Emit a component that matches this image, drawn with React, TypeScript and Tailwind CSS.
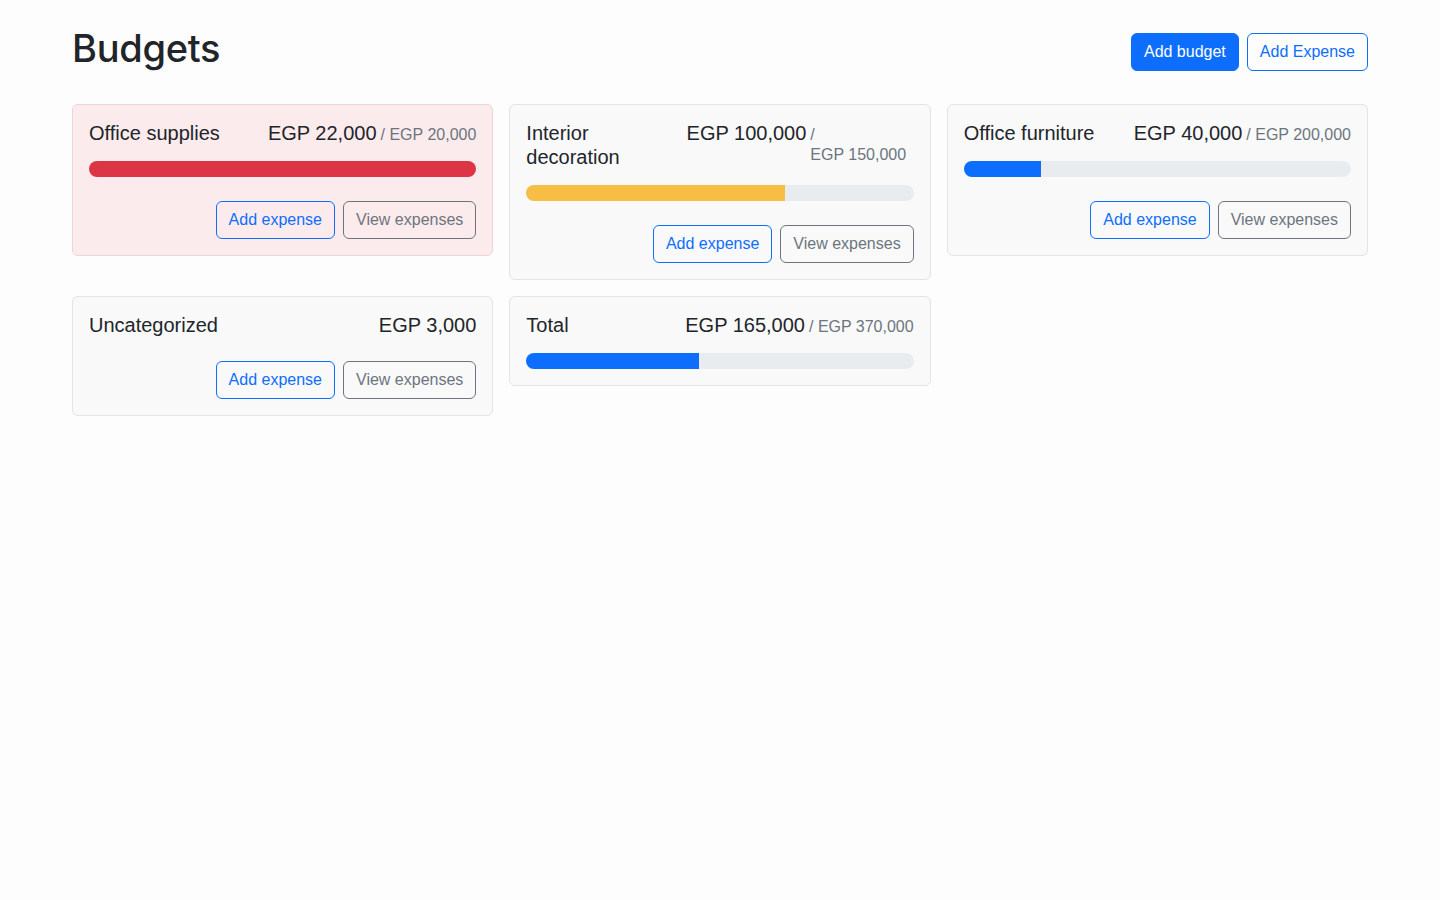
import React from "react";

type Budget = {
  name: string;
  spent: number;
  max?: number;
  actions?: boolean;
};

const BUDGETS: Budget[] = [
  { name: "Office supplies", spent: 22000, max: 20000, actions: true },
  { name: "Interior decoration", spent: 100000, max: 150000, actions: true },
  { name: "Office furniture", spent: 40000, max: 200000, actions: true },
  { name: "Uncategorized", spent: 3000, actions: true },
  { name: "Total", spent: 165000, max: 370000 },
];

const fmt = (n: number) => `EGP ${n.toLocaleString("en-US")}`;

const barColor = (ratio: number) => {
  if (ratio >= 1) return "bg-[#dc3545]";
  if (ratio >= 0.5) return "bg-[#f6be45]";
  return "bg-[#0d6efd]";
};

const BudgetCard = ({ budget }: { budget: Budget }) => {
  const ratio = budget.max ? budget.spent / budget.max : 0;
  const over = !!budget.max && budget.spent > budget.max;

  return (
    <div
      className={
        over
          ? "rounded-md border border-[#eed3d7] bg-[#fcebed] p-4"
          : "rounded-md border border-[#e3e4e6] bg-[#f9f9fa] p-4"
      }
    >
      <h2 className="mb-4 flex items-baseline justify-between text-[20px] font-normal leading-[24px] text-[#212529]">
        <div>{budget.name}</div>
        <div className="flex items-baseline">
          <span className="whitespace-nowrap">{fmt(budget.spent)}</span>
          {budget.max && (
            <span className="ml-1 text-[16px] leading-[20px] text-[#6c757d]">
              /{" "}
              <span className="whitespace-nowrap">{fmt(budget.max)}</span>
            </span>
          )}
        </div>
      </h2>

      {budget.max && (
        <div className="h-4 w-full overflow-hidden rounded-full bg-[#e9ecef]">
          <div
            className={`h-full ${barColor(ratio)}`}
            style={{ width: `${Math.min(ratio, 1) * 100}%` }}
          />
        </div>
      )}

      {budget.actions && (
        <div className="mt-6 flex justify-end gap-2">
          <button className="h-[38px] rounded-md border border-[#0d6efd] px-3 text-[16px] leading-6 text-[#0d6efd]">
            Add expense
          </button>
          <button className="h-[38px] rounded-md border border-[#6c757d] px-3 text-[16px] leading-6 text-[#6c757d]">
            View expenses
          </button>
        </div>
      )}
    </div>
  );
};

export default function App() {
  return (
    <div
      className="min-h-screen bg-[#fdfdfe] pt-6 text-[#212529]"
      style={{ fontFamily: '"Liberation Sans", Arial, sans-serif' }}
    >
      <div className="mx-auto max-w-[1320px] px-3">
        <div className="mb-6 flex items-center gap-2">
          <h1 className="mb-2 mr-auto font-['Inter'] text-[38px] font-medium leading-[48px] tracking-[-0.3px] text-[#212529]">
            Budgets
          </h1>
          <button className="h-[38px] rounded-md border border-[#0d6efd] bg-[#0d6efd] px-3 text-[16px] leading-6 text-white">
            Add budget
          </button>
          <button className="h-[38px] rounded-md border border-[#0d6efd] px-3 text-[16px] leading-6 text-[#0d6efd]">
            Add Expense
          </button>
        </div>

        <div className="grid grid-cols-3 items-start gap-4">
          {BUDGETS.map((b) => (
            <BudgetCard key={b.name} budget={b} />
          ))}
        </div>
      </div>
    </div>
  );
}
